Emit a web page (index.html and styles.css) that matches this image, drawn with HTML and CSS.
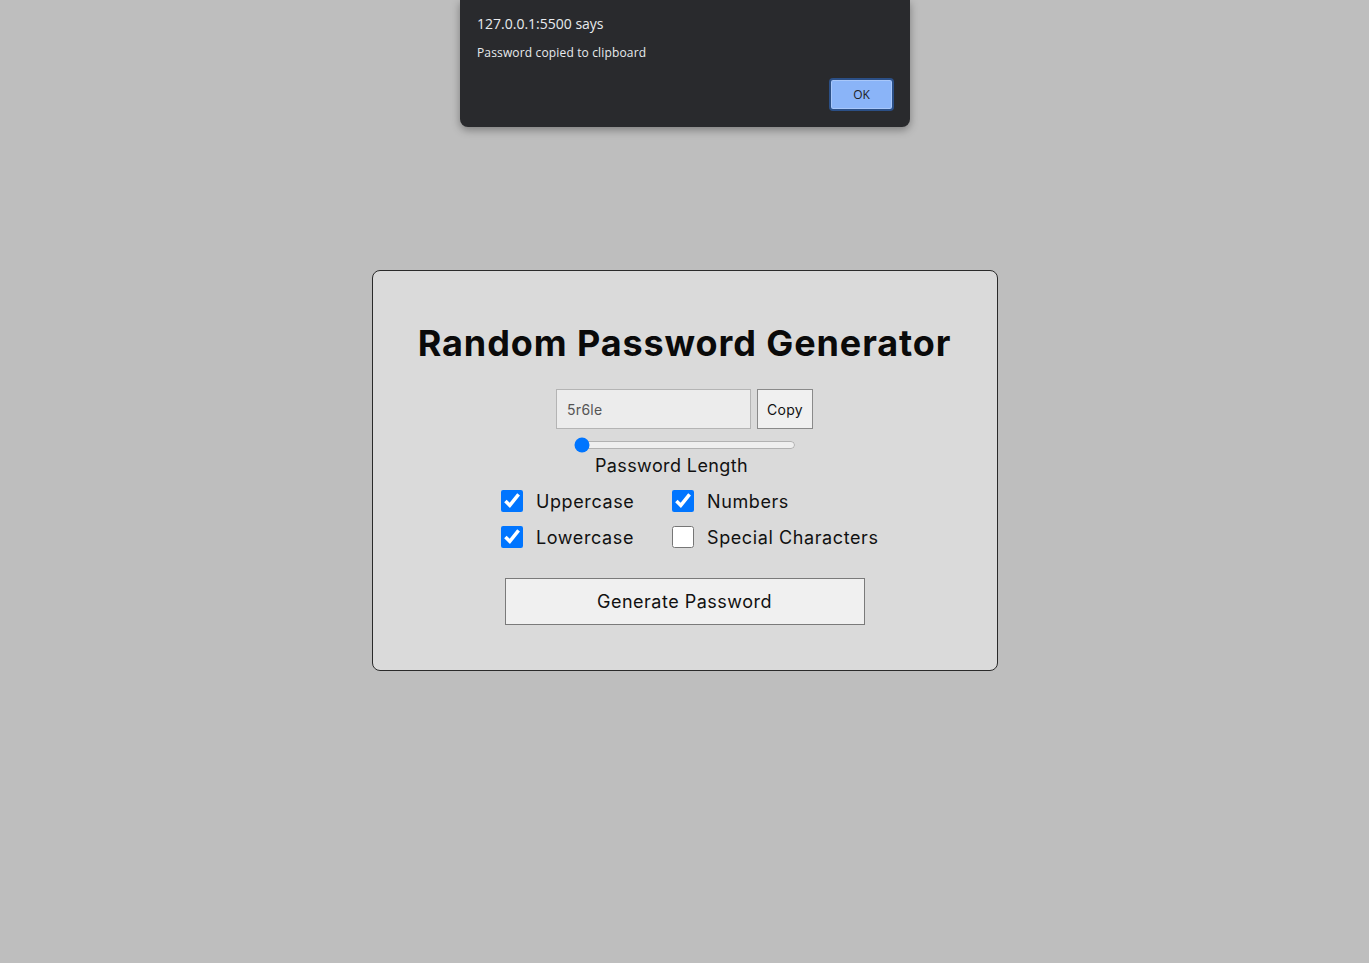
FILE: index.html
```html
<!DOCTYPE html>
<html lang="en">
<head>
<meta charset="utf-8">
<title>Random Password Generator</title>
<link rel="stylesheet" href="styles.css">
</head>
<body>
<div class="page">
  <div class="card">
    <h1 class="title">Random Password Generator</h1>
    <div class="output-row">
      <input class="output" type="text" value="5r6le" readonly>
      <button class="copy-btn">Copy</button>
    </div>
    <input class="length" type="range" min="5" max="32" value="5">
    <div class="length-label">Password Length</div>
    <div class="options">
      <label class="option"><input type="checkbox" checked><span>Uppercase</span></label>
      <label class="option"><input type="checkbox" checked><span>Numbers</span></label>
      <label class="option"><input type="checkbox" checked><span>Lowercase</span></label>
      <label class="option"><input type="checkbox"><span>Special Characters</span></label>
    </div>
    <button class="generate-btn">Generate Password</button>
  </div>
</div>
<div class="alert">
  <div class="alert-title">127.0.0.1:5500 says</div>
  <div class="alert-msg">Password copied to clipboard</div>
  <div class="alert-actions"><button class="alert-ok">OK</button></div>
</div>
</body>
</html>
```
FILE: styles.css
```css
html, body {
  margin: 0;
  padding: 0;
}
body {
  background: #bebebe;
  font-family: Inter, "Noto Sans", sans-serif;
  color: #111;
}
.page {
  min-height: 100vh;
  display: flex;
  align-items: center;
  justify-content: center;
  padding-bottom: 22px;
  box-sizing: border-box;
}
.card {
  width: 626px;
  box-sizing: border-box;
  background: #dadada;
  border: 1px solid #2a2a2a;
  border-radius: 8px;
  padding: 50px 0 45px;
  display: flex;
  flex-direction: column;
  align-items: center;
}
.title {
  margin: 0;
  font-size: 36px;
  font-weight: 700;
  line-height: 44px;
  color: #0a0a0a;
  letter-spacing: 0.9px;
}
.output-row {
  margin-top: 24px;
  display: flex;
  gap: 6px;
}
.output {
  width: 195px;
  height: 40px;
  box-sizing: border-box;
  border: 1px solid #b4b4b4;
  background: #ececec;
  padding: 0 10px;
  font-family: inherit;
  font-size: 14px;
  color: #555;
  letter-spacing: 0.3px;
  outline: none;
}
.copy-btn {
  width: 56px;
  height: 40px;
  box-sizing: border-box;
  border: 1px solid #8a8a8a;
  background: #f0f0f0;
  font-family: inherit;
  font-size: 14px;
  letter-spacing: 0.3px;
  color: #111;
  padding: 0;
}
.length {
  margin: 8px 0 0;
  width: 222px;
  height: 16px;
  accent-color: #0075ff;
}
.length-label {
  margin-top: 1px;
  font-size: 18px;
  line-height: 24px;
  letter-spacing: 0.4px;
  padding-right: 26px;
}
.options {
  margin-top: 5px;
  display: grid;
  grid-template-columns: 171px 207px;
  margin-left: 11px;
}
.option {
  display: flex;
  align-items: center;
  gap: 13px;
  height: 36px;
  font-size: 18px;
  letter-spacing: 0.6px;
  white-space: nowrap;
}
.option input {
  width: 22px;
  height: 22px;
  margin: 0;
  accent-color: #0075ff;
}
.generate-btn {
  margin-top: 23px;
  width: 360px;
  height: 47px;
  box-sizing: border-box;
  border: 1px solid #7a7a7a;
  background: #f0f0f0;
  font-family: inherit;
  font-size: 18px;
  letter-spacing: 0.5px;
  color: #111;
}
.alert {
  position: absolute;
  top: 0;
  left: 460px;
  width: 450px;
  height: 127px;
  box-sizing: border-box;
  background: #292a2d;
  border-radius: 0 0 8px 8px;
  box-shadow: 0 3px 8px rgba(0,0,0,0.35);
  padding: 14px 16px 16px 17px;
  font-family: "Open Sans", "Noto Sans", sans-serif;
  color: #e8eaed;
}
.alert-title {
  font-size: 14px;
  line-height: 20px;
}
.alert-msg {
  margin-top: 10px;
  font-size: 12px;
  line-height: 18px;
  letter-spacing: 0.15px;
}
.alert-actions {
  display: flex;
  justify-content: flex-end;
  margin-top: 16px;
}
.alert-ok {
  width: 65px;
  height: 33px;
  box-sizing: border-box;
  border: 2px solid #2b4f86;
  border-radius: 4px;
  box-shadow: inset 0 0 0 1px #a8c7fa;
  background: #8ab4f8;
  color: #202124;
  font-family: inherit;
  font-size: 12px;
  padding: 0;
}
```
